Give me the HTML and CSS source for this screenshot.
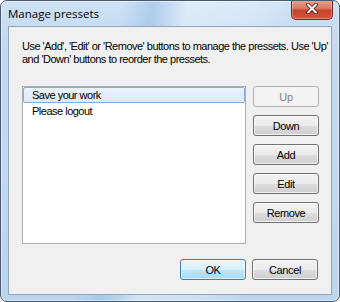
FILE: index.html
```html
<!DOCTYPE html>
<html>
<head>
<meta charset="utf-8">
<link rel="stylesheet" href="styles.css">
</head>
<body>
<div class="window">
  <div class="titlebar">
    <span class="title">Manage pressets</span>
    <div class="close">
      <svg width="12" height="11" viewBox="0 0 12 11">
        <path d="M2 1.5 L10 9.5 M10 1.5 L2 9.5" stroke="#3b1a16" stroke-width="3.6" stroke-linecap="round"/>
        <path d="M2 1.5 L10 9.5 M10 1.5 L2 9.5" stroke="#ffffff" stroke-width="2" stroke-linecap="round"/>
      </svg>
    </div>
  </div>
  <div class="client">
    <p class="desc">Use 'Add', 'Edit' or 'Remove' buttons to manage the pressets. Use 'Up'<br>and 'Down' buttons to reorder the pressets.</p>
    <div class="main">
      <ul class="list">
        <li class="item selected">Save your work</li>
        <li class="item">Please logout</li>
      </ul>
      <div class="side">
        <button class="btn" disabled>Up</button>
        <button class="btn">Down</button>
        <button class="btn">Add</button>
        <button class="btn">Edit</button>
        <button class="btn">Remove</button>
      </div>
    </div>
    <div class="footer">
      <button class="btn default">OK</button>
      <button class="btn">Cancel</button>
    </div>
  </div>
</div>
</body>
</html>
```
FILE: styles.css
```css
* { box-sizing: border-box; }
html, body { margin: 0; padding: 0; background: #ffffff; }

.window {
  width: 340px;
  height: 302px;
  border: 1px solid #4a5b70;
  border-radius: 7px;
  display: flex;
  flex-direction: column;
  overflow: hidden;
  background:
    linear-gradient(100deg, rgba(255,255,255,0) 0px, rgba(255,255,255,0) 120px, rgba(150,190,230,0.55) 150px, rgba(150,190,230,0.2) 165px, rgba(255,255,255,0.35) 185px, rgba(255,255,255,0.25) 250px, rgba(255,255,255,0) 290px),
    linear-gradient(to bottom, #cfe2f5 0px, #c3daf2 40px, #bcd5ef 302px);
  box-shadow: inset 0 0 0 1px rgba(255,255,255,0.45);
}

.titlebar {
  height: 25px;
  flex: none;
  display: flex;
  align-items: flex-start;
  justify-content: space-between;
  padding-left: 7px;
}

.title {
  font-family: "Open Sans", "Noto Sans", sans-serif;
  font-size: 11.5px;
  line-height: 16px;
  margin-top: 5px;
  color: #000000;
}

.close {
  width: 42px;
  height: 20px;
  margin-top: -1px;
  margin-right: 6px;
  border: 1px solid #6e2a22;
  border-top: none;
  border-radius: 0 0 5px 5px;
  background: linear-gradient(to bottom, #e9a593 0%, #d9785f 45%, #c6432c 55%, #d4573b 100%);
  box-shadow: inset 0 0 0 1px rgba(255,220,210,0.35);
  display: flex;
  align-items: center;
  justify-content: center;
  padding-bottom: 2px;
}
.close svg { display: block; }

.client {
  flex: 1;
  margin: 0 7px 6px 7px;
  border: 1px solid #8fa5bd;
  background: #f0f0f0;
  padding: 13px 12px 14px 13px;
  display: flex;
  flex-direction: column;
  font-family: "Liberation Sans", Arial, sans-serif;
  font-size: 11px;
  letter-spacing: -0.5px;
  color: #000000;
}

.desc {
  margin: 0;
  line-height: 13px;
  height: 26px;
  white-space: nowrap;
}

.main {
  margin-top: 20px;
  display: flex;
  gap: 7px;
  height: 158px;
}

.list {
  list-style: none;
  margin: 0;
  padding: 0;
  width: 224px;
  height: 158px;
  border: 1px solid #abadb3;
  background: #ffffff;
}

.item {
  height: 16px;
  line-height: 14px;
  padding-left: 8px;
  border: 1px solid transparent;
}

.item.selected {
  border-color: #84acdd;
  border-radius: 2px;
  background: linear-gradient(to bottom, #ebf3fd 0%, #dce9fa 100%);
}

.side {
  display: flex;
  flex-direction: column;
  gap: 8px;
}

.btn {
  width: 66px;
  height: 21px;
  padding: 0;
  font-family: "Liberation Sans", Arial, sans-serif;
  font-size: 11px;
  letter-spacing: -0.4px;
  color: #000000;
  border: 1px solid #707070;
  border-radius: 3px;
  background: linear-gradient(to bottom, #f2f2f2 0%, #ebebeb 50%, #dddddd 51%, #cfcfcf 100%);
  box-shadow: inset 0 0 0 1px rgba(255,255,255,0.7);
}

.btn:disabled {
  border-color: #adb2b5;
  background: #f4f4f4;
  color: #838383;
  box-shadow: none;
}

.btn.default {
  border-color: #3c7fb1;
  background: linear-gradient(to bottom, #e9f6fd 0%, #d7effc 50%, #bde6fd 51%, #a7d9f5 100%);
  box-shadow: inset 0 0 0 1px rgba(255,255,255,0.55);
}

.footer {
  margin-top: 15px;
  display: flex;
  justify-content: flex-end;
  gap: 6px;
  padding-right: 1px;
}
```
